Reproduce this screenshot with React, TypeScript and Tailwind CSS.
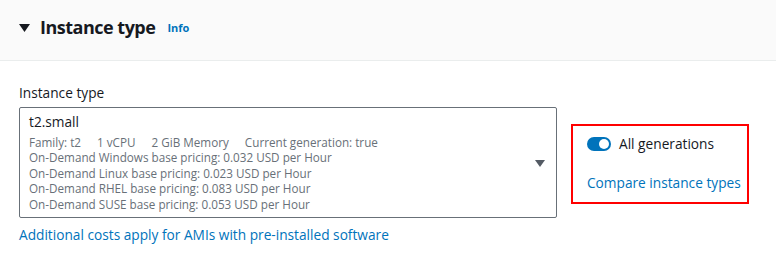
export default function App() {
  const lines = [
    "On-Demand Windows base pricing: 0.032 USD per Hour",
    "On-Demand Linux base pricing: 0.023 USD per Hour",
    "On-Demand RHEL base pricing: 0.083 USD per Hour",
    "On-Demand SUSE base pricing: 0.053 USD per Hour",
  ];

  return (
    <div className="h-[256px] w-[776px] overflow-hidden bg-white font-['Open_Sans',sans-serif] text-[#16191f]">
      {/* section header */}
      <div className="flex h-[61px] items-center border-b border-[#eaeded] bg-[#fafafa] pb-[6px] pl-[19px]">
        <svg width="11" height="8" viewBox="0 0 11 8" className="mr-[10px] mt-[1px]">
          <polygon points="0,0 11,0 5.5,8" fill="#16191f" />
        </svg>
        <h2 className="text-[18px] font-bold leading-none tracking-[-0.5px]">Instance type</h2>
        <span className="ml-[12px] mt-[3px] text-[11px] font-bold text-[#0073bb]">Info</span>
      </div>

      <div className="flex items-start px-[19px] pt-[22px]">
        <div className="w-[538px]">
          <label className="block text-[13.7px] leading-[20px]">Instance type</label>
          <div className="mt-[4px] flex h-[111px] items-center rounded-[2px] border border-[#687078] pl-[9px] pr-[11px]">
            <div className="flex-1 self-start pt-[3px]">
              <div className="text-[13.7px] leading-[22px]">t2.small</div>
              <div className="mt-[1px] flex gap-[16px] text-[11.7px] leading-[16px] text-[#687078]">
                <span>Family: t2</span>
                <span>1 vCPU</span>
                <span>2 GiB Memory</span>
                <span>Current generation: true</span>
              </div>
              {lines.map((l) => (
                <div key={l} className="text-[11.7px] leading-[15.6px] text-[#687078]">
                  {l}
                </div>
              ))}
            </div>
            <svg width="10" height="7" viewBox="0 0 10 7" className="mt-[2px]">
              <polygon points="0,0 10,0 5,7" fill="#545b64" />
            </svg>
          </div>
          <a className="mt-[7px] block text-[13.7px] leading-[20px] text-[#0073bb]">
            Additional costs apply for AMIs with pre-installed software
          </a>
        </div>

        <div className="ml-[14px] mt-[41px] flex h-[80px] w-[178px] flex-col border-2 border-[#ff0000] pl-[14px] pt-[8px]">
          <div className="flex items-center gap-[8px]">
            <span className="relative inline-block h-[14px] w-[24px] rounded-full bg-[#0073bb]">
              <span className="absolute right-[2px] top-[2px] h-[10px] w-[10px] rounded-full bg-white" />
            </span>
            <span className="text-[13.7px] leading-[20px]">All generations</span>
          </div>
          <a className="mt-[19px] text-[13.7px] leading-[20px] text-[#0073bb]">Compare instance types</a>
        </div>
      </div>
    </div>
  );
}
